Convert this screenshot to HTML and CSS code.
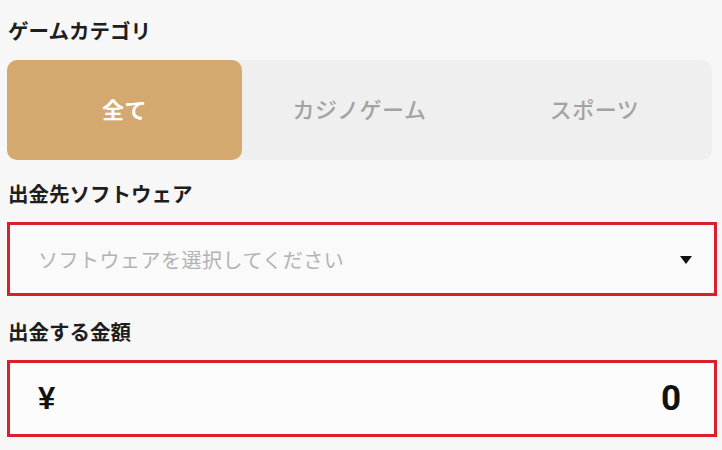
FILE: index.html
```html
<!DOCTYPE html>
<html lang="ja">
<head>
<meta charset="utf-8">
<link rel="stylesheet" href="styles.css">
</head>
<body>
<div class="page">
  <div class="label first">ゲームカテゴリ</div>
  <div class="segment">
    <div class="seg active">全て</div>
    <div class="seg">カジノゲーム</div>
    <div class="seg">スポーツ</div>
  </div>
  <div class="label second">出金先ソフトウェア</div>
  <div class="field select">
    <span class="placeholder">ソフトウェアを選択してください</span>
    <svg class="arrow" width="12" height="8" viewBox="0 0 12 8"><polygon points="0,0 12,0 6,8" fill="#111"/></svg>
  </div>
  <div class="label third">出金する金額</div>
  <div class="field amount">
    <span class="yen">¥</span>
    <span class="value">0</span>
  </div>
</div>
</body>
</html>
```
FILE: styles.css
```css
html, body {
  margin: 0;
  padding: 0;
  background: #f7f7f7;
}
body {
  font-family: "Noto Sans CJK JP", "Noto Sans", sans-serif;
  width: 722px;
  height: 450px;
  overflow: hidden;
}
.page {
  padding: 0 5px 0 7px;
  display: flex;
  flex-direction: column;
}
.label {
  font-size: 20.5px;
  font-weight: 700;
  color: #1e1e1e;
  line-height: 24px;
  height: 24px;
  padding-left: 1px;
}
.first { margin-top: 18px; }
.second { margin-top: 21px; }
.third { margin-top: 23px; }
.segment {
  margin-top: 18px;
  width: 705px;
  height: 100px;
  background: #efefef;
  border-radius: 10px;
  display: grid;
  grid-template-columns: 235px 235px 235px;
}
.seg {
  display: flex;
  align-items: center;
  justify-content: center;
  font-size: 22px;
  font-weight: 500;
  color: #a3a3a3;
  letter-spacing: 0.5px;
  padding-bottom: 5px;
}
.seg.active {
  background: #d3a970;
  color: #fff;
  font-weight: 700;
  border-radius: 10px;
}
.field {
  margin-top: 17px;
  border: 3px solid #d8212a;
  background: #fafafa;
  box-sizing: border-box;
  display: flex;
  align-items: center;
  justify-content: space-between;
  width: 710px;
}
.select {
  height: 74px;
  padding: 0 22px 0 28px;
}
.placeholder {
  font-size: 20px;
  color: #b3b3b3;
  letter-spacing: 0.5px;
}
.arrow {
  margin-top: 1px;
}
.amount {
  height: 77px;
  padding: 0 33px 0 28px;
  background: #fcfcfc;
}
.yen {
  font-family: "Liberation Sans", sans-serif;
  font-size: 31px;
  font-weight: 700;
  color: #111;
}
.value {
  font-family: "Roboto", "Liberation Sans", sans-serif;
  font-size: 35px;
  font-weight: 700;
  color: #111;
}
```
